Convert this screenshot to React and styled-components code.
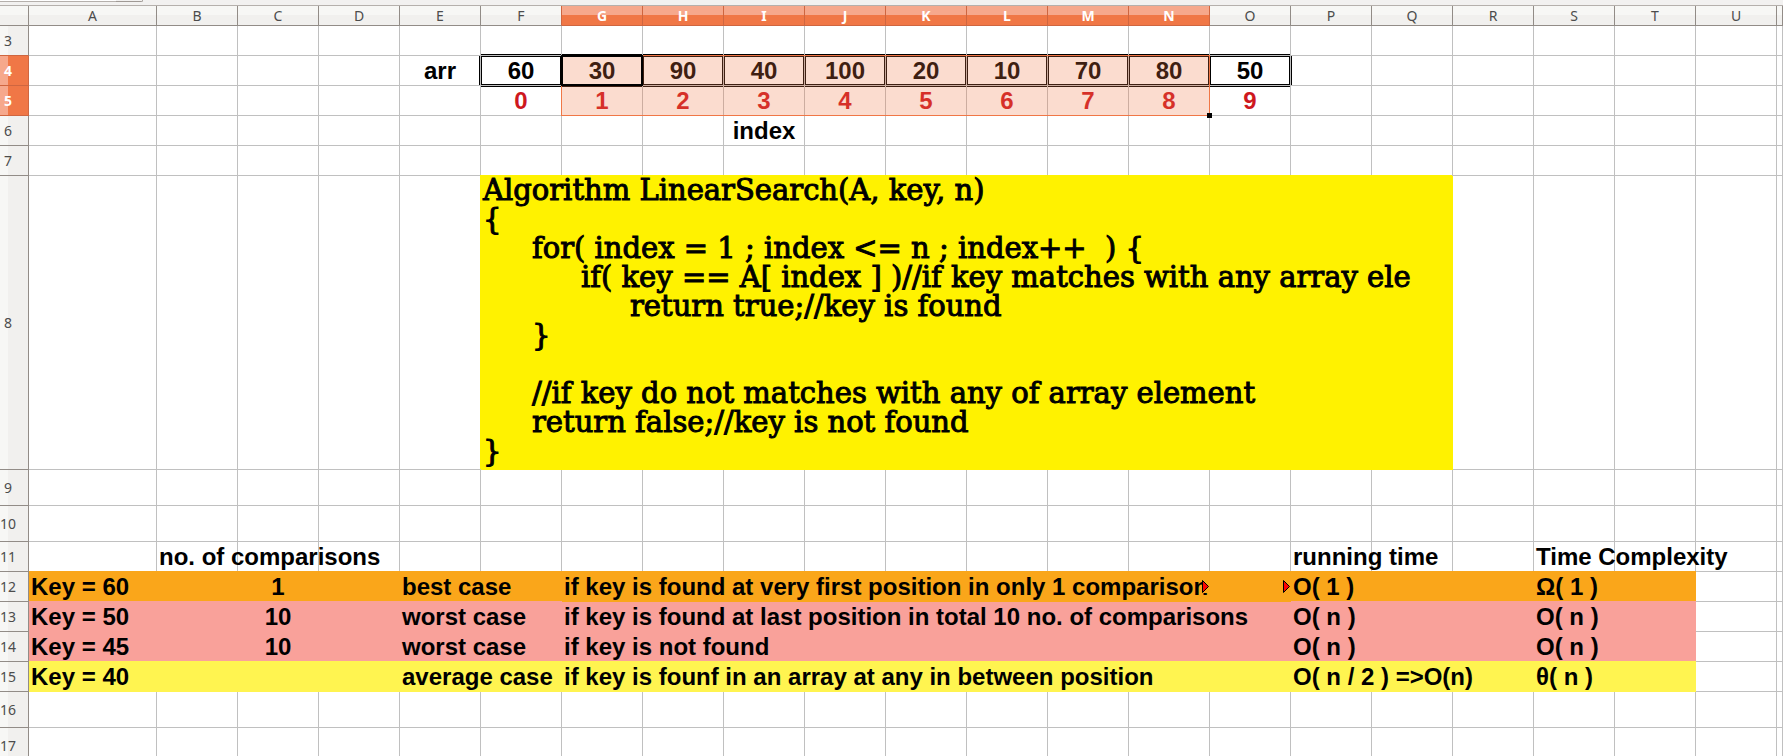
import React from 'react';
import styled, { createGlobalStyle, css } from 'styled-components';

const COLUMNS = 'ABCDEFGHIJKLMNOPQRSTU'.split('');
const COL_WIDTH = 81;
const GRID = '#c0c0c0';
const HEAD_LINE = '#928c87';
const SELECT = '#f07746';
const SELECT_LIGHT = '#f6a88c';
const SELECT_LINE = '#cf6640';

const GlobalStyle = createGlobalStyle`
  body { margin: 0; background: #fff; }
`;

const Window = styled.main`
  display: flex;
  flex-direction: column;
  height: 100vh;
  overflow: hidden;
  font-family: "Liberation Sans", Arial, sans-serif;
`;

const ToolbarEdge = styled.div`
  display: flex;
  flex: none;
  height: 5px;
  background: #f2f1f0;
  border-bottom: 1px solid #b5b0ac;
`;

const InputEdge = styled.div`
  width: 116px;
  height: 1px;
  background: #fff;
  border-bottom: 1px solid #b5b0ac;
`;

const DropEdge = styled.div`
  width: 26px;
  height: 1px;
  background: #f2f1f0;
  border: solid #a09a95;
  border-width: 0 1px 1px 0;
  border-bottom-right-radius: 4px;
`;

const Sheet = styled.table`
  flex: none;
  width: 100%;
  table-layout: fixed;
  border-collapse: separate;
  border-spacing: 0;
`;

const Col = styled.col`
  width: ${(p) => (p.$w ? `${p.$w}px` : 'auto')};
`;

const HeadRow = styled.tr`
  height: 20px;
`;

const ColumnHead = styled.th`
  box-sizing: border-box;
  height: 20px;
  padding: 0;
  font: ${(p) => (p.$on ? 700 : 400)} 14px/17px "Noto Sans", "Open Sans", sans-serif;
  color: ${(p) => (p.$on ? '#fff' : '#4c4c4c')};
  background: ${(p) =>
    p.$on
      ? `linear-gradient(${SELECT_LIGHT} 9px, ${SELECT} 9px)`
      : 'linear-gradient(#f7f7f5 9px, #f1f0ee 9px)'};
  border: solid ${(p) => (p.$on ? SELECT_LINE : HEAD_LINE)};
  border-width: 0 1px 1px 0;
  ${(p) => p.$beforeOn && `border-right-color: ${SELECT_LINE};`}
`;

const RowHead = styled.th`
  box-sizing: border-box;
  padding: 0 12px 0 0;
  font: ${(p) => (p.$on ? 700 : 400)} 14px/20px "Noto Sans", "Open Sans", sans-serif;
  color: ${(p) => (p.$on ? '#fff' : '#4c4c4c')};
  background: ${(p) =>
    p.$on
      ? `linear-gradient(90deg, ${SELECT_LIGHT} 8px, ${SELECT} 8px)`
      : 'linear-gradient(90deg, #f7f7f5 8px, #f1f0ee 8px)'};
  border: solid ${(p) => (p.$on ? SELECT_LINE : HEAD_LINE)};
  border-width: 0 1px 1px 0;
  ${(p) => p.$beforeOn && `border-bottom-color: ${SELECT_LINE};`}
`;

const Row = styled.tr`
  height: ${(p) => p.$h}px;
`;

const edges = {
  all: 'inset 0 0 0 1px #000',
  top: 'inset 0 1px 0 #000',
  bottom: 'inset 0 -1px 0 #000',
  left: 'inset 1px 0 0 #000',
  right: 'inset -1px 0 0 #000',
};

const Cell = styled.td`
  box-sizing: border-box;
  position: ${(p) => (p.$anchor ? 'relative' : 'static')};
  padding: ${(p) => (p.$center ? '0' : '0 0 0 2px')};
  font-size: 24px;
  font-weight: 700;
  line-height: 29px;
  white-space: nowrap;
  text-align: ${(p) => (p.$center ? 'center' : 'left')};
  color: ${(p) => p.$color || '#000'};
  border: solid ${GRID};
  border-width: 0 1px 1px 0;
  ${(p) => p.$edge && `box-shadow: ${edges[p.$edge]};`}
  ${(p) =>
    p.$fill &&
    css`
      background: ${p.$fill};
      border-color: ${p.$fill};
      box-shadow: 0 -1px 0 ${p.$fill};
    `}
`;

const CodeCell = styled.td`
  box-sizing: border-box;
  padding: 0 2px;
  vertical-align: top;
  background: #fff200;
  border: solid #fff200;
  border-width: 0 1px 1px 0;
  box-shadow: -1px -1px 0 #fff200;
`;

const Code = styled.pre`
  margin: 0;
  font: 400 29px/29px "DejaVu Serif", serif;
  -webkit-text-stroke: 1px #000;
  color: #000;
`;

const CodeLine = styled.div`
  min-height: 29px;
  padding-left: ${(p) => p.$level * 49}px;
`;

const Text = styled.span`
  position: relative;
`;

const Selection = styled.div`
  position: absolute;
  z-index: 1;
  top: -1px;
  left: -1px;
  box-sizing: border-box;
  width: ${COL_WIDTH * 8 + 1}px;
  height: 61px;
  background: rgba(240, 119, 70, 0.26);
  border: 1px solid ${SELECT};
`;

const ActiveFrame = styled.div`
  position: absolute;
  z-index: 2;
  top: -1px;
  left: -1px;
  box-sizing: border-box;
  width: ${COL_WIDTH + 1}px;
  height: 31px;
  border: 2px solid #000;
`;

const FillHandle = styled.div`
  position: absolute;
  right: -3px;
  bottom: -3px;
  width: 5px;
  height: 5px;
  background: #000;
`;

const Arrow = styled.svg`
  position: absolute;
  right: 0;
  top: 8px;
  width: 7px;
  height: 13px;
  background: ${(p) => p.$fill};
`;

function OverflowArrow({ fill }) {
  return (
    <Arrow $fill={fill} viewBox="0 0 7 13" aria-hidden="true">
      <path d="M0.5 0.5 L6.5 6.5 L0.5 12.5 Z" fill="#ff0000" stroke="#000" strokeWidth="1" />
    </Arrow>
  );
}

const CODE = [
  [0, 'Algorithm LinearSearch(A, key, n)'],
  [0, '{'],
  [1, 'for( index = 1 ; index <= n ; index++  ) {'],
  [2, 'if( key == A[ index ] )//if key matches with any array ele'],
  [3, 'return true;//key is found'],
  [1, '}'],
  [0, ''],
  [1, '//if key do not matches with any of array element'],
  [1, 'return false;//key is not found'],
  [0, '}'],
];

const ARRAY = [60, 30, 90, 40, 100, 20, 10, 70, 80, 50];
const RED = '#ce181e';
const ORANGE = '#faa61a';
const PINK = '#f9a19a';
const YELLOW = '#fff450';

const boxedColumns = COLUMNS.slice(5, 15);
const perColumn = (columns, make) =>
  Object.fromEntries(columns.map((name, i) => [name, make(i)]));

const ROWS = [
  { n: 3, h: 30, cells: perColumn(boxedColumns, () => ({ edge: 'bottom' })) },
  {
    n: 4,
    h: 30,
    on: true,
    cells: {
      ...perColumn(boxedColumns, (i) => ({ text: ARRAY[i], center: true, edge: 'all', selection: i === 1 })),
      E: { text: 'arr', center: true, edge: 'right' },
      P: { edge: 'left' },
    },
  },
  {
    n: 5,
    h: 30,
    on: true,
    cells: perColumn(boxedColumns, (i) => ({ text: i, center: true, color: RED, edge: 'top' })),
  },
  { n: 6, h: 30, cells: { I: { text: 'index', center: true } } },
  { n: 7, h: 30, cells: {} },
  { n: 8, h: 294, cells: { F: { code: true, span: 12 } } },
  { n: 9, h: 36, cells: {} },
  { n: 10, h: 36, cells: {} },
  {
    n: 11,
    h: 30,
    cells: {
      B: { text: 'no. of comparisons' },
      P: { text: 'running time' },
      S: { text: 'Time Complexity' },
    },
  },
  {
    n: 12,
    h: 30,
    fill: ORANGE,
    cells: {
      A: { text: 'Key = 60' },
      C: { text: '1', center: true },
      E: { text: 'best case' },
      G: { text: 'if key is found at very first position in only 1 comparison', span: 8, clipped: true },
      O: { clipped: true },
      P: { text: 'O( 1 )' },
      S: { text: 'Ω( 1 )' },
    },
  },
  {
    n: 13,
    h: 30,
    fill: PINK,
    cells: {
      A: { text: 'Key = 50' },
      C: { text: '10', center: true },
      E: { text: 'worst case' },
      G: { text: 'if key is found at last position in total 10 no. of comparisons' },
      P: { text: 'O( n )' },
      S: { text: 'O( n )' },
    },
  },
  {
    n: 14,
    h: 30,
    fill: PINK,
    cells: {
      A: { text: 'Key = 45' },
      C: { text: '10', center: true },
      E: { text: 'worst case' },
      G: { text: 'if key is not found' },
      P: { text: 'O( n )' },
      S: { text: 'O( n )' },
    },
  },
  {
    n: 15,
    h: 30,
    fill: YELLOW,
    cells: {
      A: { text: 'Key = 40' },
      E: { text: 'average case' },
      G: { text: 'if key is founf in an array at any in between position' },
      P: { text: 'O( n / 2 ) =>O(n)' },
      S: { text: 'θ( n )' },
    },
  },
  { n: 16, h: 36, cells: {} },
  { n: 17, h: 36, cells: {} },
];

function SheetCell({ cell, fill }) {
  if (cell.code) {
    return (
      <CodeCell colSpan={cell.span}>
        <Code>
          {CODE.map(([level, text], i) => (
            <CodeLine key={i} $level={level}>
              {text}
            </CodeLine>
          ))}
        </Code>
      </CodeCell>
    );
  }
  return (
    <Cell
      colSpan={cell.span}
      $center={cell.center}
      $color={cell.color}
      $edge={cell.edge}
      $fill={fill}
      $anchor={cell.selection || cell.clipped}
    >
      {cell.text !== undefined && <Text>{cell.text}</Text>}
      {cell.clipped && <OverflowArrow fill={fill} />}
      {cell.selection && (
        <>
          <Selection>
            <FillHandle />
          </Selection>
          <ActiveFrame />
        </>
      )}
    </Cell>
  );
}

function SheetRow({ row, beforeOn }) {
  const cells = [];
  for (let i = 0; i < COLUMNS.length; ) {
    const name = COLUMNS[i];
    const cell = row.cells[name] || {};
    cells.push(<SheetCell key={name} cell={cell} fill={i < 20 ? row.fill : undefined} />);
    i += cell.span || 1;
  }
  return (
    <Row $h={row.h}>
      <RowHead scope="row" $on={row.on} $beforeOn={beforeOn}>
        {row.n}
      </RowHead>
      {cells}
      <Cell />
    </Row>
  );
}

export default function App() {
  return (
    <Window>
      <GlobalStyle />
      <ToolbarEdge>
        <InputEdge />
        <DropEdge />
      </ToolbarEdge>
      <Sheet>
        <colgroup>
          <Col $w={29} />
          {COLUMNS.map((name) => (
            <Col key={name} $w={name === 'A' ? 128 : COL_WIDTH} />
          ))}
          <Col />
        </colgroup>
        <thead>
          <HeadRow>
            <ColumnHead />
            {COLUMNS.map((name) => (
              <ColumnHead key={name} scope="col" $on={name >= 'G' && name <= 'N'} $beforeOn={name === 'F'}>
                {name}
              </ColumnHead>
            ))}
            <ColumnHead />
          </HeadRow>
        </thead>
        <tbody>
          {ROWS.map((row, i) => (
            <SheetRow key={row.n} row={row} beforeOn={Boolean(ROWS[i + 1]?.on)} />
          ))}
        </tbody>
      </Sheet>
    </Window>
  );
}
